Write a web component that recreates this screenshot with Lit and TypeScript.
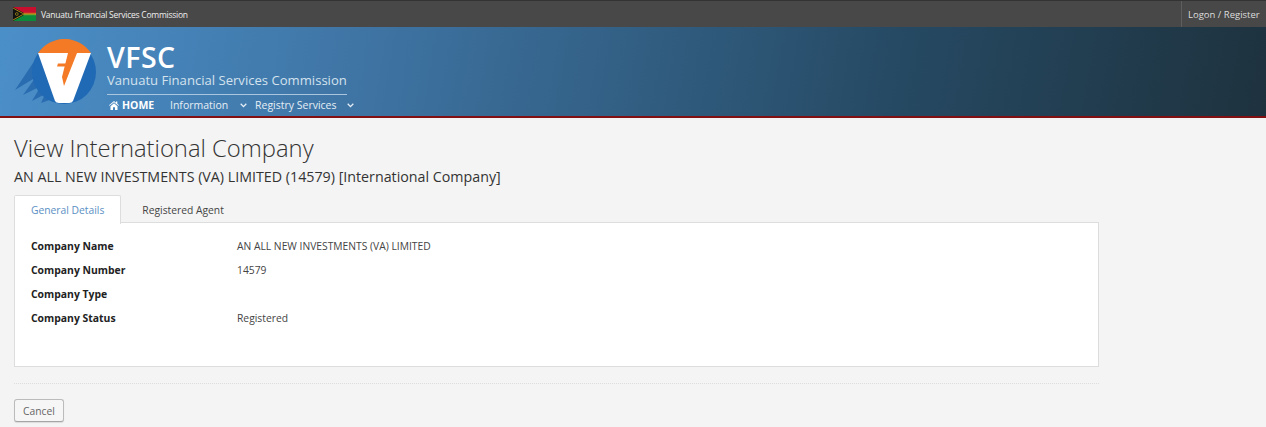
import { LitElement, html, css } from "lit";
import { customElement } from "lit/decorators.js";

const DETAILS = [
  ["Company Name", "AN ALL NEW INVESTMENTS (VA) LIMITED"],
  ["Company Number", "14579"],
  ["Company Type", ""],
  ["Company Status", "Registered"],
];

@customElement("app-root")
export class AppRoot extends LitElement {
  static styles = css`
    :host {
      display: block;
      min-height: 427px;
      background: #f4f4f4;
      font-family: "Open Sans", sans-serif;
      color: #333;
      overflow: hidden;
    }
    .topbar {
      height: 26px;
      border-top: 1px solid #333;
      background: #484848;
      display: flex;
      align-items: center;
      justify-content: space-between;
      color: #eee;
      font-size: 8.5px;
      letter-spacing: -0.24px;
    }
    .site {
      display: flex;
      align-items: center;
      gap: 5px;
      padding-left: 13px;
    }
    .flag {
      display: block;
    }
    .login {
      align-self: stretch;
      display: flex;
      align-items: center;
      padding: 0 6px;
      width: 72px;
      border-left: 1px solid #5e5e5e;
      font-size: 9.5px;
      letter-spacing: 0;
      color: #ddd;
      white-space: nowrap;
    }
    .banner {
      height: 89px;
      background: linear-gradient(100deg, #4b8fc9 0%, #3f75a5 28%, #264a64 70%, #1e323e 100%);
      border-bottom: 2px solid #820f12;
      display: flex;
      padding-left: 14px;
    }
    .logo {
      display: block;
      margin-top: 12px;
    }
    .brand {
      margin-left: 9px;
      width: 240px;
    }
    .brand h1 {
      margin: 16px 0 0;
      font-size: 28.5px;
      line-height: 29px;
      font-weight: 600;
      color: #fff;
      letter-spacing: 0.5px;
    }
    .brand .full {
      font-size: 13.1px;
      line-height: 17px;
      color: #d4e2ee;
      padding-bottom: 5px;
      border-bottom: 1px solid #a9c6de;
      white-space: nowrap;
    }
    nav {
      display: flex;
      align-items: center;
      height: 20px;
      padding-left: 2px;
      font-size: 10.5px;
      color: #e6eef5;
      white-space: nowrap;
    }
    nav > span {
      flex: none;
    }
    nav .home {
      font-weight: 700;
      color: #fff;
      display: flex;
      align-items: center;
      gap: 3px;
      width: 61px;
    }
    nav .item {
      display: flex;
      align-items: center;
    }
    nav .item svg {
      display: block;
    }
    .info {
      width: 77px;
      margin-right: 8px;
      justify-content: space-between;
    }
    .registry {
      width: 99px;
      justify-content: space-between;
    }
    main {
      width: 1085px;
      padding: 0 0 0 14px;
    }
    h2 {
      margin: 15px 0 0;
      font-size: 23.8px;
      line-height: 30px;
      font-weight: 300;
      color: #333;
    }
    h3 {
      margin: 4px 0 0;
      font-size: 14.26px;
      line-height: 20px;
      font-weight: 400;
      color: #333;
    }
    .tabs {
      display: flex;
      margin-top: 8px;
      font-size: 10.3px;
      height: 27px;
      position: relative;
      z-index: 1;
    }
    .tab {
      padding: 0 16px;
      line-height: 29px;
      color: #444;
      border: 1px solid transparent;
      border-bottom: none;
    }
    .tab + .tab {
      margin-left: 4px;
    }
    .tab.active {
      background: #fff;
      color: #5b8fc4;
      border-color: #ddd;
      border-radius: 2px 2px 0 0;
      height: 28px;
    }
    .panel {
      background: #fff;
      border: 1px solid #ddd;
      height: 145px;
      box-sizing: border-box;
      padding: 11px 16px 0;
    }
    .row {
      display: grid;
      grid-template-columns: 206px 1fr;
      height: 24px;
      line-height: 24px;
      font-size: 10.3px;
      color: #444;
    }
    .row b {
      color: #222;
      font-weight: 700;
      font-size: 10.4px;
    }
    hr {
      border: none;
      border-top: 1px dotted #ddd;
      margin: 16px 0 15px;
    }
    button {
      display: block;
      width: 50px;
      height: 23px;
      padding: 0;
      font: inherit;
      font-size: 10.3px;
      color: #666;
      background: #f6f6f6;
      border: 1px solid #bbb;
      border-bottom-color: #a5a5a5;
      border-radius: 3px;
      box-shadow: 0 1px 1px rgba(0, 0, 0, 0.1);
    }
  `;

  private _chevron() {
    return html`<svg width="7" height="5" viewBox="0 0 7 5" fill="none" stroke="#e6eef5" stroke-width="1.3">
      <path d="M.7.8 3.5 3.6 6.3.8" />
    </svg>`;
  }

  private _flag() {
    return html`<svg class="flag" width="23" height="14" viewBox="0 0 23 14">
      <rect width="23" height="7" fill="#c8102e" />
      <rect y="7" width="23" height="7" fill="#0a8a3a" />
      <path d="M0 0 11 6v2L0 14z" fill="#111" />
      <path d="M0 1 9.500 6.300H23v1.400H9.500L0 13" fill="none" stroke="#c9a81a" stroke-width=".8" />
      <circle cx="3.800" cy="7" r="1.400" fill="none" stroke="#c9a81a" stroke-width=".6" />
    </svg>`;
  }

  private _logo() {
    return html`<svg class="logo" width="84" height="66" viewBox="14 39 84 66">
      <g fill="#2a6cb0">
        <path d="M35 60 15 90 38 76z" />
        <path d="M38 74 23 95 43 85z" />
        <path d="M42 84 32 101 47 93z" />
        <path d="M46 92 41 103 52 99z" />
      </g>
      <circle cx="64" cy="72" r="32" fill="#1f69b5" />
      <path d="M38 53a32 32 0 0 1 53 0z" fill="#f47a26" />
      <path d="M38 53h53L73 101q-1 2-4 2H59q-3 0-4-2z" fill="#fff" />
      <path d="M71 53h6L64 86l-2-9 6-24z" fill="#f47a26" />
      <path d="M58 63.500h11l-.8 3H57z" fill="#f47a26" />
    </svg>`;
  }

  protected render() {
    return html`
      <div class="topbar">
        <div class="site">${this._flag()}<span>Vanuatu Financial Services Commission</span></div>
        <div class="login">Logon / Register</div>
      </div>
      <header class="banner">
        ${this._logo()}
        <div class="brand">
          <h1>VFSC</h1>
          <div class="full">Vanuatu Financial Services Commission</div>
          <nav>
            <span class="home">
              <svg width="10" height="9" viewBox="0 0 10 9" fill="#fff">
                <path d="M5 0 0 4.200l.5.600L5 1.200l4.500 3.600.5-.6L8.300 2.800V.6H7v1.100zM1.500 5.200V9h2.500V6.200h2V9h2.500V5.200L5 2.300z" />
              </svg>
              HOME
            </span>
            <span class="item info">Information ${this._chevron()}</span>
            <span class="item registry">Registry Services ${this._chevron()}</span>
          </nav>
        </div>
      </header>
      <main>
        <h2>View International Company</h2>
        <h3>AN ALL NEW INVESTMENTS (VA) LIMITED (14579) [International Company]</h3>
        <div class="tabs">
          <div class="tab active">General Details</div>
          <div class="tab">Registered Agent</div>
        </div>
        <section class="panel">
          ${DETAILS.map(([k, v]) => html`<div class="row"><b>${k}</b><span>${v}</span></div>`)}
        </section>
        <hr />
        <button>Cancel</button>
      </main>
    `;
  }
}
